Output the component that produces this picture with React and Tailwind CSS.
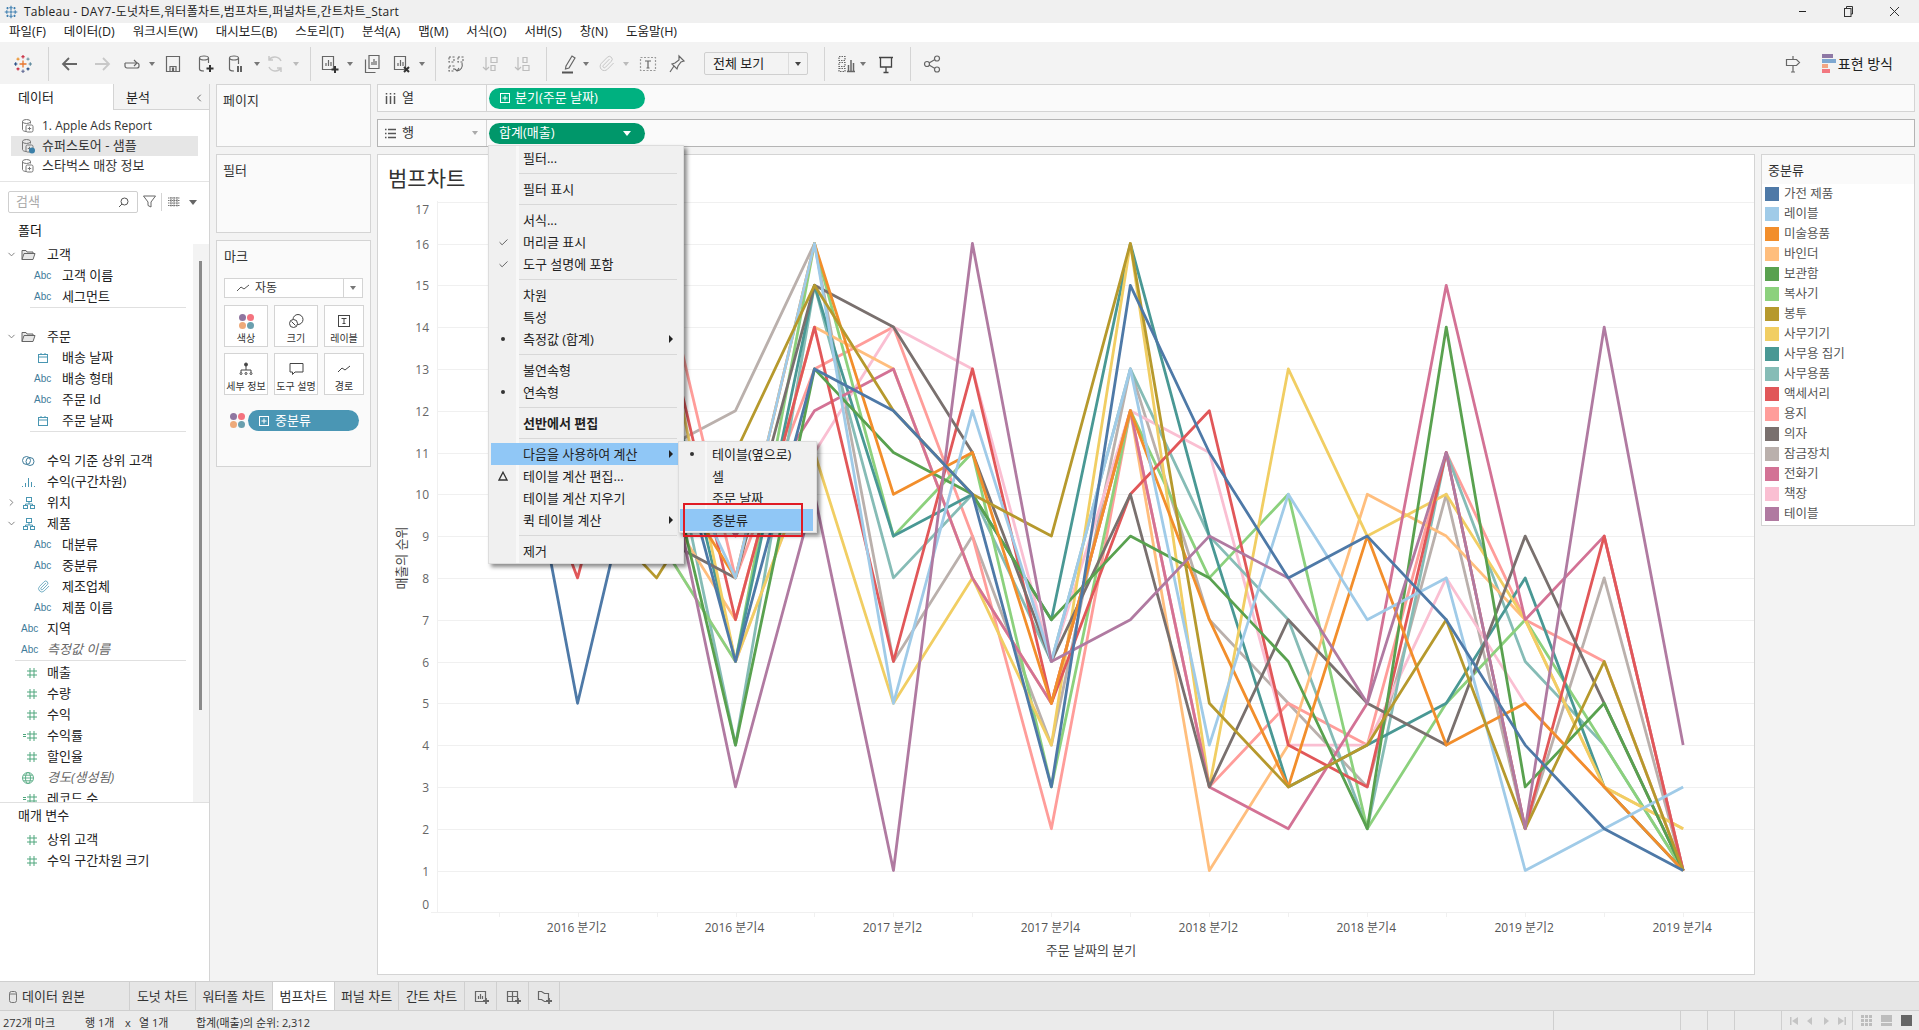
import React from "react";
import { ChevronDown, ChevronRight, ChevronLeft, Check, Paperclip } from "lucide-react";

const SERIES = [
  ["가전 제품", "#4e79a7", [15,5,13,6,13,12,10,3,15,11,8,9,7,4,2,1]],
  ["레이블", "#a0cbe8", [12,9,12,8,16,5,12,6,13,4,10,7,8,1,2,3]],
  ["미술용품", "#f28e2b", [9,12,11,8,16,10,11,5,12,7,3,9,4,5,3,1]],
  ["바인더", "#ffbe7d", [13,11,10,7,14,13,8,5,12,1,4,10,9,7,3,2]],
  ["보관함", "#59a14f", [10,13,12,4,13,11,10,7,9,8,6,2,14,3,5,1]],
  ["복사기", "#8cd17d", [11,10,9,6,16,9,11,3,12,8,10,2,5,7,4,1]],
  ["봉투", "#b6992d", [14,10,8,11,15,12,10,9,16,5,3,4,7,2,6,1]],
  ["사무기기", "#f1ce63", [10,14,15,6,11,5,8,4,16,3,13,9,10,7,3,2]],
  ["사무용 집기", "#499894", [11,15,14,6,15,9,10,7,16,9,3,4,5,8,3,1]],
  ["사무용품", "#86bcb6", [10,11,13,4,15,8,10,6,13,9,7,2,11,6,4,1]],
  ["액세서리", "#e15759", [13,8,15,7,14,6,13,5,10,12,4,3,11,2,9,1]],
  ["용지", "#ff9d9a", [12,12,16,8,13,14,9,2,12,3,5,4,11,7,6,1]],
  ["의자", "#79706e", [11,11,9,8,15,14,11,6,10,3,7,5,4,9,5,1]],
  ["잠금장치", "#bab0ac", [9,10,11,12,16,6,9,4,13,7,5,3,10,2,8,1]],
  ["전화기", "#d37295", [11,14,12,9,12,13,8,5,12,3,2,5,15,7,9,1]],
  ["책장", "#fabfd2", [13,9,9,6,11,14,13,6,12,11,4,4,8,5,3,1]],
  ["테이블", "#b07aa1", [12,9,12,3,10,1,16,6,7,9,8,5,11,2,14,4]],
];
const DRAW_ORDER = [13,11,15,9,5,3,8,7,14,10,12,4,2,1,6,16,0];

const gx = (i) => 497.6 + 78.97 * i;
const gy = (v) => 912.3 - 41.8 * v;

const I = ({ w = 20, h = 20, vb, className = "", children, sw = 1.2, stroke = "#666" }) => (
  <svg width={w} height={h} viewBox={vb || `0 0 ${w} ${h}`} fill="none" stroke={stroke} strokeWidth={sw} className={"shrink-0 " + className}>
    {children}
  </svg>
);

const Caret = ({ className = "", color = "border-t-[#777]" }) => (
  <span className={`block shrink-0 w-0 h-0 border-l-[3px] border-r-[3px] border-t-[4px] border-l-transparent border-r-transparent ${color} ${className}`} />
);

const Sep = ({ className = "" }) => <span className={`shrink-0 w-px h-[34px] bg-[#d4d4d4] ${className}`} />;

const TableauLogo = () => (
  <svg width="20" height="20" viewBox="0 0 20 20" strokeWidth="1.100" fill="none" className="shrink-0">
    <path d="M10 6.500v7M6.500 10h7" stroke="#e8762d" strokeWidth="1.300" />
    <path d="M10 1v3.400M8.300 2.700h3.400" stroke="#c72035" />
    <path d="M10 15.600V19M8.300 17.300h3.400" stroke="#5b6591" />
    <path d="M1 10h3.400M2.700 8.300v3.400" stroke="#1f457e" />
    <path d="M15.600 10H19M17.300 8.300v3.400" stroke="#59879b" />
    <path d="M5 3.600v3M3.500 5.100h3" stroke="#eb912b" />
    <path d="M15 3.600v3M13.500 5.100h3" stroke="#7099a6" />
    <path d="M5 13.400v3M3.500 14.900h3" stroke="#c72035" />
    <path d="M15 13.400v3M13.500 14.900h3" stroke="#1f447e" />
  </svg>
);

const TitleLogo = () => (
  <svg width="14" height="14" viewBox="0 0 20 20" stroke="#3f7fb0" strokeWidth="1.600" fill="none" className="shrink-0">
    <path d="M10 1v6M7.500 4h5M10 13v6M7.500 16h5M1 10h6M4 7.500v5M13 10h6M16 7.500v5M7.500 10h5M10 7.500v5" />
    <path d="M5 3v3M3.500 4.500h3M15 3v3M13.500 4.500h3M5 14v3M3.500 15.500h3M15 14v3M13.500 15.500h3" />
  </svg>
);

const DsIcon = ({ badge }) => (
  <svg width="16" height="16" viewBox="0 0 16 16" fill="none" stroke="#777" strokeWidth="1" className="shrink-0">
    <ellipse cx="6.500" cy="3.500" rx="4" ry="2" />
    <path d="M2.500 3.500v8c0 1 1.600 2 4 2M10.500 3.500v2" />
    <rect x="6" y="7" width="7" height="7" rx="1.500" />
    <path d="M9.500 8.800v3.400M7.800 10.500h3.400" />
    {badge && <circle cx="12" cy="12.500" r="3" fill="#3b7fa8" stroke="none" />}
  </svg>
);

const HashIcon = ({ calc }) => (
  <div className="flex items-center justify-end w-[16px] gap-[1px]">
    {calc && <span className="w-[3px] h-[3px] border-y border-[#4ea67c] shrink-0" />}
    <svg width="10" height="10" viewBox="0 0 10 10" stroke="#4ea67c" strokeWidth="1" fill="none" className="shrink-0">
      <path d="M3 0v10M7 0v10M0 3h10M0 7h10" />
    </svg>
  </div>
);

const Abc = () => <span className="w-[18px] text-[10px] leading-none text-[#3f7c9a] font-['Liberation_Sans',sans-serif]">Abc</span>;

const CalIcon = () => (
  <svg width="18" height="12" viewBox="0 0 18 12" stroke="#4996b2" fill="none" className="shrink-0">
    <rect x="4.500" y="2.500" width="9" height="8" />
    <path d="M4.500 5h9M7 1v2M11 1v2" />
  </svg>
);

const Hier = () => (
  <svg width="16" height="14" viewBox="0 0 16 14" stroke="#4996b2" fill="none" className="shrink-0">
    <rect x="5.500" y="1.500" width="5" height="4" />
    <rect x="2.500" y="9.500" width="4" height="3" />
    <rect x="9.500" y="9.500" width="4" height="3" />
    <path d="M8 6v2M4.500 9V8h7v1" />
  </svg>
);

const Folder = () => (
  <svg width="15" height="12" viewBox="0 0 15 12" stroke="#666" fill="#e7e7e7" className="shrink-0">
    <path d="M1 10.500v-9h4l1 1.500h6v1.500" />
    <path d="M1 10.500l2-6h11l-2 6z" />
  </svg>
);

const Globe = () => (
  <svg width="14" height="14" viewBox="0 0 14 14" stroke="#5fb08a" fill="none" className="shrink-0">
    <circle cx="7" cy="7" r="5.500" />
    <ellipse cx="7" cy="7" rx="2.500" ry="5.500" />
    <path d="M1.500 7h11M2.300 4.200h9.400M2.300 9.800h9.400" />
  </svg>
);

const Venn = () => (
  <svg width="15" height="14" viewBox="0 0 15 14" stroke="#3f7c9a" fill="none" className="shrink-0">
    <circle cx="5.500" cy="6.500" r="4" />
    <circle cx="9" cy="7.500" r="4" />
  </svg>
);

const Bins = () => (
  <svg width="15" height="12" viewBox="0 0 15 12" stroke="#4996b2" fill="none" className="shrink-0">
    <path d="M1.500 11v-1M4.500 11V7M7.500 11V2M10.500 11V6M13.500 11v-1" />
  </svg>
);

const Row = ({ ic, label, sub, italic, exp }) => (
  <div className="h-[21px] flex items-center shrink-0 relative">
    <div className="w-[19px] flex justify-center pl-[4px]">
      {exp === "d" && <ChevronDown size={11} color="#777" />}
      {exp === "r" && <ChevronRight size={11} color="#777" />}
    </div>
    {sub ? (
      <>
        <div className="w-[15px]" />
        <div className="w-[28px] flex items-center">{ic}</div>
      </>
    ) : (
      <div className="w-[28px] flex items-center pl-[2px]">{ic}</div>
    )}
    <span className={`text-[13px] whitespace-nowrap ${italic ? "italic text-[#666]" : "text-[#222]"}`}>{label}</span>
  </div>
);

const Card = ({ className = "", children }) => (
  <div className={`bg-[#fafafa] border border-[#d4d4d4] ${className}`}>{children}</div>
);

const MarkBtn = ({ icon, label }) => (
  <div className="h-[42px] border border-[#d4d4d4] bg-white flex flex-col items-center justify-between pt-[5px] pb-[1px]">
    <div className="h-[20px] flex items-center">{icon}</div>
    <span className="text-[10px] leading-[13px] text-[#333] whitespace-nowrap">{label}</span>
  </div>
);

const Dots = () => (
  <div className="grid grid-cols-2 gap-[1px] w-[15px] shrink-0">
    <span className="w-[7px] h-[7px] rounded-full bg-[#8f76a0]" />
    <span className="w-[7px] h-[7px] rounded-full bg-[#f4737f]" />
    <span className="w-[7px] h-[7px] rounded-full bg-[#eeaa7a]" />
    <span className="w-[7px] h-[7px] rounded-full bg-[#6a9fae]" />
  </div>
);

const PlusBox = ({ color = "#fff" }) => (
  <svg width="10" height="10" viewBox="0 0 10 10" stroke={color} fill="none" className="shrink-0">
    <rect x="0.500" y="0.500" width="9" height="9" />
    <path d="M5 2.500v5M2.500 5h5" />
  </svg>
);

const MenuItem = ({ label, mark, arrow, bold, active }) => (
  <div className={`h-[22px] flex items-center ${active ? "bg-[#90c7f6]" : ""}`}>
    <div className="w-[24px] flex justify-center text-[#333]">
      {mark === "check" && <Check size={11} color="#555" />}
      {mark === "dot" && <span className="w-[4px] h-[4px] rounded-full bg-[#333]" />}
      {mark === "delta" && (
        <svg width="10" height="10" viewBox="0 0 10 10" stroke="#333" strokeWidth="1.300" fill="none"><path d="M5 1.200L9 9H1z" /></svg>
      )}
    </div>
    <span className={`ml-[8px] pt-[1px] text-[13px] whitespace-nowrap text-[#222] ${bold ? "font-bold" : ""}`}>{label}</span>
    {arrow && (
      <span className="ml-auto mr-[8px] w-0 h-0 border-y-[4px] border-l-[4px] border-y-transparent border-l-[#222]" />
    )}
  </div>
);

const MenuSep = () => (
  <div className="h-[9px] flex items-center pl-[28px] pr-[4px]">
    <div className="w-full h-px bg-[#d8d8d8]" />
  </div>
);

const Chart = () => (
  <svg width="1376" height="777" viewBox="377 196 1376 777" className="block">
    <g stroke="#f0f0f0" strokeWidth="1" fill="none">
      {Array.from({ length: 18 }).map((_, v) => (
        <path key={v} d={`M${v === 0 ? 430 : 436} ${Math.round(gy(v)) + 0.5}H1753`} />
      ))}
      <path d="M436.500 201V912" />
      {Array.from({ length: 16 }).map((_, i) => (
        <path key={i} d={`M${Math.round(gx(i)) + 0.5} 912V917`} />
      ))}
    </g>
    {DRAW_ORDER.map((k) => {
      const [n, c, d] = SERIES[k];
      return <polyline key={n} points={d.map((v, i) => `${gx(i)},${gy(v)}`).join(" ")} fill="none" stroke={c} strokeWidth="2.800" strokeLinejoin="round" />;
    })}
    <g fill="#666" fontSize="12" textAnchor="end">
      {Array.from({ length: 18 }).map((_, v) => (
        <text key={v} x="428" y={(v === 17 ? 210 : v === 0 ? 905 : gy(v) + 1) + 4}>{v}</text>
      ))}
    </g>
    <g fill="#555" fontSize="12" textAnchor="middle">
      {["2016 분기2","2016 분기4","2017 분기2","2017 분기4","2018 분기2","2018 분기4","2019 분기2","2019 분기4"].map((t, k) => (
        <text key={t} x={gx(1 + 2 * k) - 1} y="932">{t}</text>
      ))}
    </g>
    <text x="1090" y="955" textAnchor="middle" fontSize="13" fill="#444">주문 날짜의 분기</text>
    <text transform="translate(405 558) rotate(-90)" textAnchor="middle" fontSize="13" fill="#444">매출의 순위</text>
  </svg>
);

const Tab = ({ label, active, className = "" }) => (
  <div className={`h-full flex items-center justify-center pt-[1px] border-r border-[#cfcfcf] text-[13px] text-[#333] whitespace-nowrap ${active ? "bg-white" : ""} ${className}`}>{label}</div>
);

export default function App() {
  return (
    <div className="w-[1919px] h-[1030px] flex flex-col overflow-hidden relative bg-[#f3f3f3] text-[#222] font-['Open_Sans','Noto_Sans_CJK_KR',sans-serif]">
      {/* title bar */}
      <div className="h-[23px] bg-[#f0f0f0] flex items-center pl-[4px] shrink-0">
        <TitleLogo />
        <span className="ml-[6px] text-[12px] tracking-[0.23px] text-[#222] whitespace-nowrap">Tableau - DAY7-도넛차트,워터폴차트,범프차트,퍼널차트,간트차트_Start</span>
        <div className="ml-auto flex items-center">
          <span className="w-[7px] h-px bg-[#222]" />
          <svg width="11" height="11" viewBox="0 0 11 11" stroke="#333" fill="none" className="ml-[37px]">
            <rect x="1.500" y="2.500" width="6.500" height="8" />
            <path d="M3.500 2.500V0.500H9.500V8H8" />
          </svg>
          <svg width="11" height="11" viewBox="0 0 11 11" stroke="#333" fill="none" className="ml-[35px] mr-[19px]">
            <path d="M1 1l9 9M10 1l-9 9" />
          </svg>
        </div>
      </div>
      {/* menu bar */}
      <div className="h-[20px] bg-white flex items-center pl-[9px] gap-[18px] shrink-0 border-b border-[#f3f3f3] text-[12.5px] text-[#222]">
        {["파일(F)","데이터(D)","워크시트(W)","대시보드(B)","스토리(T)","분석(A)","맵(M)","서식(O)","서버(S)","창(N)","도움말(H)"].map((m) => (
          <span key={m} className="whitespace-nowrap">{m}</span>
        ))}
      </div>
      {/* toolbar */}
      <div className="h-[41px] bg-[#f3f3f3] flex items-center shrink-0">
        <div className="ml-[13px]"><TableauLogo /></div>
        <Sep className="ml-[15px]" />
        <I className="ml-[11px]" sw={1.800} stroke="#666"><path d="M17 10H4M9 4l-6 6 6 6" /></I>
        <I className="ml-[12px]" sw={1.800} stroke="#c8c8c8"><path d="M3 10h13M11 4l6 6-6 6" /></I>
        <I className="ml-[10px]"><path d="M3 9h12a2 2 0 0 1 2 2v1a2 2 0 0 1-2 2H5a2 2 0 0 1-2-2V9" /><path d="M12 6l3 3-3 3" /></I>
        <Caret className="ml-[7px]" />
        <I className="ml-[8px]"><path d="M3.500 2.500h13v15h-13z" /><path d="M7 17.500v-5h6v5" /><path d="M9.500 14h1v3h-1z" fill="#666" /></I>
        <I className="ml-[13px]"><ellipse cx="8" cy="4" rx="4.500" ry="2" /><path d="M3.500 4v11c0 1 2 2 4.500 2M12.500 4v5" /><path d="M14 11v7M10.500 14.500h7" strokeWidth="2" stroke="#333" /></I>
        <I className="ml-[10px]"><ellipse cx="8" cy="4" rx="4.500" ry="2" /><path d="M3.500 4v11c0 1 2 2 4.500 2M12.500 4v6" /><path d="M12 12v6M15 12v6" strokeWidth="1.500" stroke="#333" /></I>
        <Caret className="ml-[8px]" />
        <I className="ml-[5px]" stroke="#c8c8c8" sw={1.500}><path d="M16 7a7 7 0 0 0-12-1M4 13a7 7 0 0 0 12 1M4 2v4h4M16 18v-4h-4" /></I>
        <Caret className="ml-[8px]" color="border-t-[#bbb]" />
        <Sep className="ml-[11px]" />
        <I className="ml-[8px]"><path d="M3.500 2.500h11v13h-11z" /><path d="M7 12V9M9.500 12V6M12 12V8" /><path d="M16 12v7M12.500 15.500h7" strokeWidth="2" stroke="#333" /></I>
        <Caret className="ml-[8px]" />
        <I className="ml-[9px]"><path d="M7 1.500h10v13H7z" /><path d="M3.500 5.500v13h10" /><path d="M10 11V8M12 11V5M14 11V7" /></I>
        <I className="ml-[9px]"><path d="M3.500 2.500h11v13h-11z" /><path d="M7 12V9M9.500 12V6M12 12V8" /><path d="M13 13l5 5M18 13l-5 5" strokeWidth="2" stroke="#333" /></I>
        <Caret className="ml-[8px]" />
        <Sep className="ml-[10px]" />
        <I className="ml-[10px]" sw={1.100}><path strokeDasharray="2 1.500" d="M3 3h5v5H3zM12 3h5v5h-5zM3 12h5v5H3z" /><path d="M16 9c1 4-1 7-5 8M9 15l2 2 2-3" /></I>
        <I className="ml-[14px]" stroke="#bdbdbd"><path d="M6 3v13M3 13l3 3 3-3" /><path d="M11 3.500h6v5h-6zM11 11.500h4v5h-4z" /></I>
        <I className="ml-[12px]" stroke="#bdbdbd"><path d="M6 3v13M3 13l3 3 3-3" /><path d="M11 3.500h4v5h-4zM11 11.500h6v5h-6z" /></I>
        <Sep className="ml-[14px]" />
        <I className="ml-[11px]"><path d="M8 12l6-10 3 2-6 10-3.500 1z" /><path d="M4 18.500h11" strokeWidth="2" stroke="#555" /></I>
        <Caret className="ml-[5px]" />
        <div className="ml-[7px] w-[20px] flex justify-center"><Paperclip size={17} color="#c4c4c4" strokeWidth={1.400} /></div>
        <Caret className="ml-[7px]" color="border-t-[#bbb]" />
        <I className="ml-[9px]" stroke="#999"><path strokeDasharray="2 1.500" d="M2.500 3.500h15v13h-15z" /><path stroke="#666" d="M7 7h6M10 7v7M8.500 14h3" /></I>
        <I className="ml-[9px]"><path d="M12 2l5 5-3 1-3 4-1 3-5-5 3-1 4-3zM7 12l-4 6" /></I>
        <div className="ml-[17px] w-[104px] h-[23px] border border-[#cfcfcf] rounded-[2px] bg-[#f3f3f3] flex items-center pl-[8px] text-[13px] text-[#222]">
          <span>전체 보기</span>
          <span className="ml-auto w-[19px] h-full flex items-center justify-center border-l border-[#dcdcdc]"><Caret color="border-t-[#444]" /></span>
        </div>
        <Sep className="ml-[16px]" />
        <I className="ml-[11px]"><path d="M3 2.500h6v4H3zM3 8.500h6v4H3zM3 14.500h6v3H3z" strokeDasharray="1.500 1" /><path d="M11 17.500h8M12.500 17V11M15 17V6M17.500 17V9" strokeWidth="1.500" /></I>
        <Caret className="ml-[4px]" />
        <I className="ml-[10px]"><path d="M3 3.500h14M4.500 4v9h11V4M10 13v5M7.500 18.500h5" strokeWidth="1.300" stroke="#444" /></I>
        <Sep className="ml-[14px]" />
        <I className="ml-[11px]"><circle cx="5" cy="10" r="2.500" /><circle cx="15" cy="4.500" r="2.500" /><circle cx="15" cy="15.500" r="2.500" /><path d="M7 9l6-3.500M7 11l6 3.500" /></I>
        <div className="ml-auto flex items-center pr-[26px]">
          <I><path d="M10 2v3M3.500 5.500h10l3 3-3 3h-10zM10 12v6M8 18h4" /></I>
          <div className="ml-[19px] flex flex-col gap-[1px] w-[14px]">
            <span className="h-[4px] w-[11px] bg-[#8e78a5]" />
            <span className="h-[4px] w-[14px] bg-[#7fa8d1]" />
            <span className="h-[4px] w-[6px] bg-[#f4a582]" />
            <span className="h-[4px] w-[8px] bg-[#f2777f]" />
          </div>
          <span className="ml-[2px] text-[14px] text-[#222] whitespace-nowrap">표현 방식</span>
        </div>
      </div>
      {/* body */}
      <div className="flex-1 min-h-0 flex">
        {/* data pane */}
        <div className="w-[210px] bg-white border-r border-[#d4d4d4] flex flex-col shrink-0">
          <div className="h-[26px] flex shrink-0">
            <div className="w-[113px] flex items-center pl-[18px] pt-[2px] text-[13px] text-[#222]">데이터</div>
            <div className="flex-1 bg-[#f3f3f3] border-l border-b border-[#d4d4d4] flex items-center pl-[12px] pt-[2px] text-[13px] text-[#222]">
              <span>분석</span>
              <ChevronLeft size={12} color="#666" className="ml-auto mr-[4px]" />
            </div>
          </div>
          <div className="h-[72px] shrink-0 border-b border-[#e4e4e4] pt-[6px] pl-[11px] pr-[11px] flex flex-col">
            <div className="h-[20px] flex items-center pl-[9px] gap-[6px] text-[12px] text-[#333] whitespace-nowrap"><DsIcon />1. Apple Ads Report</div>
            <div className="h-[20px] flex items-center pl-[9px] gap-[6px] text-[13px] text-[#333] bg-[#e6e6e6] whitespace-nowrap"><DsIcon badge />슈퍼스토어 - 샘플</div>
            <div className="h-[20px] flex items-center pl-[9px] gap-[6px] text-[13px] text-[#333] whitespace-nowrap"><DsIcon />스타벅스 매장 정보</div>
          </div>
          <div className="h-[35px] shrink-0 flex items-start pl-[8px] pt-[9px]">
            <div className="w-[130px] h-[22px] border border-[#cfcfcf] rounded-[2px] flex items-center pl-[7px] pr-[8px] text-[13px] text-[#aaa]">
              <span>검색</span>
              <svg width="11" height="11" viewBox="0 0 11 11" stroke="#555" fill="none" className="ml-auto"><circle cx="6.500" cy="4.500" r="3.500" /><path d="M4 7l-3 3" /></svg>
            </div>
            <svg width="13" height="13" viewBox="0 0 13 13" stroke="#666" fill="none" className="ml-[5px] mt-[4px]"><path d="M0.500 1h12L8 7v5L5 10.500V7z" /></svg>
            <span className="ml-[5px] mt-[2px] w-px h-[18px] bg-[#d4d4d4]" />
            <svg width="12" height="10" viewBox="0 0 12 10" stroke="#777" fill="none" className="ml-[6px] mt-[6px]"><path d="M0 1h12M0 3.500h12M0 6h12M0 8.500h12M3 0v10M6 0v10M9 0v10" strokeDasharray="1.500 0.500" /></svg>
            <Caret className="ml-[9px] mt-[9px] !border-l-[4px] !border-r-[4px] !border-t-[5px]" color="border-t-[#666]" />
          </div>
          <div className="h-[27px] shrink-0 flex items-center pl-[18px] text-[13px] text-[#111]">폴더</div>
          <div className="h-[558px] shrink-0 flex overflow-hidden">
            <div className="w-[193px] flex flex-col">
              <Row exp="d" ic={<Folder />} label="고객" />
              <Row sub ic={<Abc />} label="고객 이름" />
              <Row sub ic={<Abc />} label="세그먼트" />
              <div className="ml-[30px] mr-[7px] h-px bg-[#e0e0e0] shrink-0" />
              <div className="h-[18px] shrink-0" />
              <Row exp="d" ic={<Folder />} label="주문" />
              <Row sub ic={<CalIcon />} label="배송 날짜" />
              <Row sub ic={<Abc />} label="배송 형태" />
              <Row sub ic={<Abc />} label="주문 Id" />
              <Row sub ic={<CalIcon />} label="주문 날짜" />
              <div className="ml-[30px] mr-[7px] h-px bg-[#e0e0e0] shrink-0" />
              <div className="h-[18px] shrink-0" />
              <Row ic={<Venn />} label="수익 기준 상위 고객" />
              <Row ic={<Bins />} label="수익(구간차원)" />
              <Row exp="r" ic={<Hier />} label="위치" />
              <Row exp="d" ic={<Hier />} label="제품" />
              <Row sub ic={<Abc />} label="대분류" />
              <Row sub ic={<Abc />} label="중분류" />
              <Row sub ic={<div className="w-[18px] flex justify-center"><Paperclip size={13} color="#4996b2" strokeWidth={1.400} /></div>} label="제조업체" />
              <Row sub ic={<Abc />} label="제품 이름" />
              <Row ic={<Abc />} label="지역" />
              <Row ic={<Abc />} label="측정값 이름" italic />
              <div className="ml-[15px] mr-[7px] h-px bg-[#e0e0e0] shrink-0" />
              <div className="h-[1px] shrink-0" />
              <Row ic={<HashIcon />} label="매출" />
              <Row ic={<HashIcon />} label="수량" />
              <Row ic={<HashIcon />} label="수익" />
              <Row ic={<HashIcon calc />} label="수익률" />
              <Row ic={<HashIcon />} label="할인율" />
              <Row ic={<Globe />} label="경도(생성됨)" italic />
              <Row ic={<HashIcon calc />} label="레코드 수" />
            </div>
            <div className="w-[16px] bg-[#f3f3f3] pt-[17px] pl-[6px]">
              <div className="w-[3px] h-[449px] bg-[#8a8a8a]" />
            </div>
          </div>
          <div className="border-t border-[#e0e0e0] flex flex-col">
            <div className="h-[25px] flex items-center pl-[18px] text-[13px] text-[#222]">매개 변수</div>
            <div className="mt-[1px]">
              <Row ic={<HashIcon />} label="상위 고객" />
              <Row ic={<HashIcon />} label="수익 구간차원 크기" />
            </div>
          </div>
        </div>
        {/* cards column */}
        <div className="w-[155px] ml-[6px] shrink-0 flex flex-col gap-[7px]">
          <Card className="h-[63px] pl-[6px] pt-[6px] text-[13px] text-[#333]">페이지</Card>
          <Card className="h-[79px] pl-[6px] pt-[6px] text-[13px] text-[#333]">필터</Card>
          <Card className="h-[227px] px-[7px] pt-[6px]">
            <div className="text-[13px] text-[#333] h-[31px]">마크</div>
            <div className="h-[20px] mt-[0px] bg-white border border-[#d4d4d4] flex items-center text-[#333] text-[12px]">
              <svg width="14" height="10" viewBox="0 0 14 10" stroke="#555" fill="none" className="ml-[11px]"><path d="M1 8l4-4 3 2 5-4" /></svg>
              <span className="ml-[5px]">자동</span>
              <span className="ml-auto w-[19px] h-full border-l border-[#d4d4d4] flex items-center justify-center"><Caret className="!border-l-[3.500px] !border-r-[3.500px]" color="border-t-[#777]" /></span>
            </div>
            <div className="mt-[7px] grid grid-cols-[44px_44px_40px] gap-[6px]">
              <MarkBtn label="색상" icon={<Dots />} />
              <MarkBtn label="크기" icon={<svg width="16" height="16" viewBox="0 0 16 16" stroke="#444" fill="none"><circle cx="10" cy="6.500" r="5" /><circle cx="5.500" cy="10.500" r="4" fill="#fff" /><path d="M3.500 8.500l4 4" /></svg>} />
              <MarkBtn label="레이블" icon={<svg width="14" height="14" viewBox="0 0 14 14" stroke="#444" fill="none"><rect x="1.500" y="1.500" width="11" height="11" /><path d="M4.500 4.500h5M7 4.500v5M5.500 9.500h3" /></svg>} />
              <MarkBtn label="세부 정보" icon={<svg width="14" height="14" viewBox="0 0 14 14" stroke="#444" fill="none"><circle cx="7" cy="2.500" r="1.500" fill="#444" /><path d="M7 4v4M2 10V8h10v2" /><circle cx="2" cy="11.500" r="1" /><circle cx="7" cy="11.500" r="1" /><circle cx="12" cy="11.500" r="1" /></svg>} />
              <MarkBtn label="도구 설명" icon={<svg width="15" height="14" viewBox="0 0 15 14" stroke="#444" fill="none"><path d="M1 1.500h13v8.500H6L3.500 12.500V10H1z" /></svg>} />
              <MarkBtn label="경로" icon={<svg width="14" height="10" viewBox="0 0 14 10" stroke="#444" fill="none"><path d="M1 8l4-4 3 2 5-4" /></svg>} />
            </div>
            <div className="mt-[15px] flex items-center pl-[6px]">
              <Dots />
              <div className="ml-[3px] w-[111px] h-[21px] rounded-full bg-[#4a96b4] flex items-center pl-[11px] gap-[6px] text-[13px] text-white">
                <PlusBox />
                <span>중분류</span>
              </div>
            </div>
          </Card>
        </div>
        {/* right */}
        <div className="ml-[6px] w-[1538px] shrink-0 flex flex-col">
          <div className="h-[28px] bg-[#fafafa] border border-[#d4d4d4] flex">
            <div className="w-[109px] border-r border-[#d4d4d4] flex items-center pl-[7px] text-[13px] text-[#333] gap-[6px]">
              <svg width="11" height="11" viewBox="0 0 11 11" stroke="#555" strokeWidth="1.500" fill="none"><path d="M1.500 3v8M5.500 3v8M9.500 3v8" /><path d="M1.500 0v1.500M5.500 0v1.500M9.500 0v1.500" /></svg>
              <span>열</span>
            </div>
            <div className="flex items-center pl-[2px]">
              <div className="w-[156px] h-[21px] rounded-full bg-[#00b180] flex items-center pl-[11px] gap-[5px] text-[13px] text-white">
                <PlusBox />
                <span className="whitespace-nowrap">분기(주문 날짜)</span>
              </div>
            </div>
          </div>
          <div className="h-[28px] mt-[7px] bg-[#fafafa] border border-[#b4b4b4] flex">
            <div className="w-[109px] border-r border-[#d4d4d4] flex items-center pl-[7px] text-[13px] text-[#333] gap-[6px]">
              <svg width="11" height="11" viewBox="0 0 11 11" stroke="#555" strokeWidth="1.500" fill="none"><path d="M3 1.500h8M3 5.500h8M3 9.500h8M0 1.500h1.500M0 5.500h1.500M0 9.500h1.500" /></svg>
              <span>행</span>
              <Caret className="ml-auto mr-[8px]" color="border-t-[#aaa]" />
            </div>
            <div className="flex items-center pl-[2px]">
              <div className="w-[156px] h-[21px] rounded-full bg-[#00976a] flex items-center pl-[10px] text-[13px] text-white">
                <span className="whitespace-nowrap">합계(매출)</span>
                <Caret className="ml-auto mr-[14px] !border-l-[4px] !border-r-[4px] !border-t-[5px]" color="border-t-white" />
              </div>
            </div>
          </div>
          <div className="mt-[7px] flex gap-[6px]">
            <div className="w-[1378px] h-[821px] bg-white border border-[#d4d4d4] flex flex-col">
              <div className="h-[41px] shrink-0 flex items-center pl-[10px] pt-[6px] text-[21px] text-[#333]">범프차트</div>
              <Chart />
            </div>
            <div className="w-[154px] h-[372px] bg-white border border-[#d4d4d4] flex flex-col">
              <div className="h-[29px] bg-[#fafafa] flex items-center pl-[6px] pt-[2px] text-[13px] text-[#333]">중분류</div>
              <div className="flex flex-col">
                {SERIES.map(([n, c]) => (
                  <div key={n} className="h-[20px] flex items-center pl-[3px]">
                    <span className="w-[14px] h-[14px] shrink-0" style={{ backgroundColor: c }} />
                    <span className="ml-[5px] text-[12.5px] text-[#555] whitespace-nowrap">{n}</span>
                  </div>
                ))}
              </div>
            </div>
          </div>
        </div>
      </div>
      {/* sheet tabs */}
      <div className="h-[30px] shrink-0 bg-[#e6e6e6] border-t border-[#cfcfcf] border-b flex">
        <Tab className="w-[130px] gap-[5px] !justify-start pl-[9px]" label={<><svg width="8" height="12" viewBox="0 0 8 12" stroke="#777" fill="none"><rect x="0.500" y="0.500" width="7" height="11" rx="2" /><path d="M0.500 3h7" /></svg><span>데이터 원본</span></>} />
        <Tab className="w-[66px]" label="도넛 차트" />
        <Tab className="w-[77px]" label="워터폴 차트" />
        <Tab className="w-[62px]" active label="범프차트" />
        <Tab className="w-[64px]" label="퍼널 차트" />
        <Tab className="w-[66px]" label="간트 차트" />
        <Tab className="w-[32px]" label={<I w={16} h={16} stroke="#666"><path d="M2.500 2.500h10v10h-10z" /><path d="M5.500 10V7M7.500 10V5M9.500 10V7" /><path d="M13 9v6M10 12h6" strokeWidth="1.800" stroke="#666" /></I>} />
        <Tab className="w-[32px]" label={<I w={16} h={16} stroke="#666"><path d="M2.500 2.500h10v10h-10zM2.500 7.500h10M7.500 2.500v10" /><path d="M13 9v6M10 12h6" strokeWidth="1.800" stroke="#666" /></I>} />
        <Tab className="w-[31px]" label={<I w={16} h={16} stroke="#666"><path d="M2.500 2.500h3l3 2h4v8h-4l-3-2h-3z" /><path d="M13 9v6M10 12h6" strokeWidth="1.800" stroke="#666" /></I>} />
      </div>
      {/* status */}
      <div className="h-[19px] shrink-0 bg-[#ebebeb] flex items-center text-[11px] text-[#333]">
        <div className="flex items-center h-full pt-[5px]">
          <span className="ml-[3px] w-[82px] whitespace-nowrap">272개 마크</span>
          <span className="w-[40px] whitespace-nowrap">행 1개</span>
          <span className="w-[14px]">x</span>
          <span className="w-[57px] whitespace-nowrap">열 1개</span>
          <span className="whitespace-nowrap">합계(매출)의 순위: 2,312</span>
        </div>
        <div className="ml-auto flex h-full">
          <span className="w-[127px] border-l border-[#cfcfcf]" />
          <span className="w-[27px] border-l border-[#cfcfcf]" />
          <span className="w-[27px] border-l border-[#cfcfcf]" />
          <span className="w-[47px] border-l border-[#cfcfcf]" />
          <div className="w-[71px] border-l border-[#cfcfcf] flex items-center pl-[8px] gap-[8px]">
            <svg width="8" height="8" viewBox="0 0 8 8" fill="#c4c4c4"><path d="M0 0h1.500v8H0zM8 0v8L2 4z" /></svg>
            <svg width="8" height="8" viewBox="0 0 8 8" fill="#c4c4c4"><path d="M6 0v8L1 4z" /></svg>
            <svg width="8" height="8" viewBox="0 0 8 8" fill="#c4c4c4"><path d="M2 0v8l5-4z" /></svg>
            <svg width="8" height="8" viewBox="0 0 8 8" fill="#c4c4c4"><path d="M0 0v8l6-4zM6.500 0H8v8H6.500z" /></svg>
          </div>
          <div className="w-[67px] border-l border-[#cfcfcf] flex items-center pl-[8px] gap-[9px]">
            <span className="grid grid-cols-3 gap-[1px] w-[11px] shrink-0">
              {Array.from({ length: 9 }).map((_, i) => <span key={i} className="w-[3px] h-[3px] bg-[#bdbdbd]" />)}
            </span>
            <span className="flex flex-col gap-[1px] w-[11px] shrink-0">
              <span className="w-[11px] h-[7px] bg-[#bdbdbd]" />
              <span className="w-[11px] h-[3px] bg-[#bdbdbd]" />
            </span>
            <span className="w-[11px] h-[11px] bg-[#666] shrink-0" />
          </div>
        </div>
      </div>
      {/* context menus */}
      <div className="absolute left-[488px] top-[145px] w-[196px] h-[419px] bg-[#f0f0f0] border border-[#dddddd] shadow-[3px_3px_4px_rgba(0,0,0,0.45)] pl-[2px] pt-[1px] pr-[2px]">
        <div className="absolute left-[27px] top-0 bottom-0 w-[3px] bg-[#f8f8f8]" />
        <div className="relative flex flex-col">
          <MenuItem label="필터..." />
          <MenuSep />
          <MenuItem label="필터 표시" />
          <MenuSep />
          <MenuItem label="서식..." />
          <MenuItem label="머리글 표시" mark="check" />
          <MenuItem label="도구 설명에 포함" mark="check" />
          <MenuSep />
          <MenuItem label="차원" />
          <MenuItem label="특성" />
          <MenuItem label="측정값 (합계)" mark="dot" arrow />
          <MenuSep />
          <MenuItem label="불연속형" />
          <MenuItem label="연속형" mark="dot" />
          <MenuSep />
          <MenuItem label="선반에서 편집" bold />
          <MenuSep />
          <MenuItem label="다음을 사용하여 계산" arrow active />
          <MenuItem label="테이블 계산 편집..." mark="delta" />
          <MenuItem label="테이블 계산 지우기" />
          <MenuItem label="퀵 테이블 계산" arrow />
          <MenuSep />
          <MenuItem label="제거" />
        </div>
      </div>
      <div className="absolute left-[678px] top-[441px] w-[139px] h-[92px] bg-[#f0f0f0] border border-[#dddddd] shadow-[3px_3px_4px_rgba(0,0,0,0.45)] pl-[1px] pr-[3px] pt-[1px]">
        <div className="absolute left-[26px] top-0 bottom-0 w-[2px] bg-[#f8f8f8]" />
        <div className="relative flex flex-col">
          <MenuItem label="테이블(옆으로)" mark="dot" />
          <MenuItem label="셀" />
          <MenuItem label="주문 날짜" />
          <MenuItem label="중분류" active />
        </div>
      </div>
      <div className="absolute left-[683px] top-[503px] w-[120px] h-[34px] border-2 border-[#e01b24]" />
    </div>
  );
}
